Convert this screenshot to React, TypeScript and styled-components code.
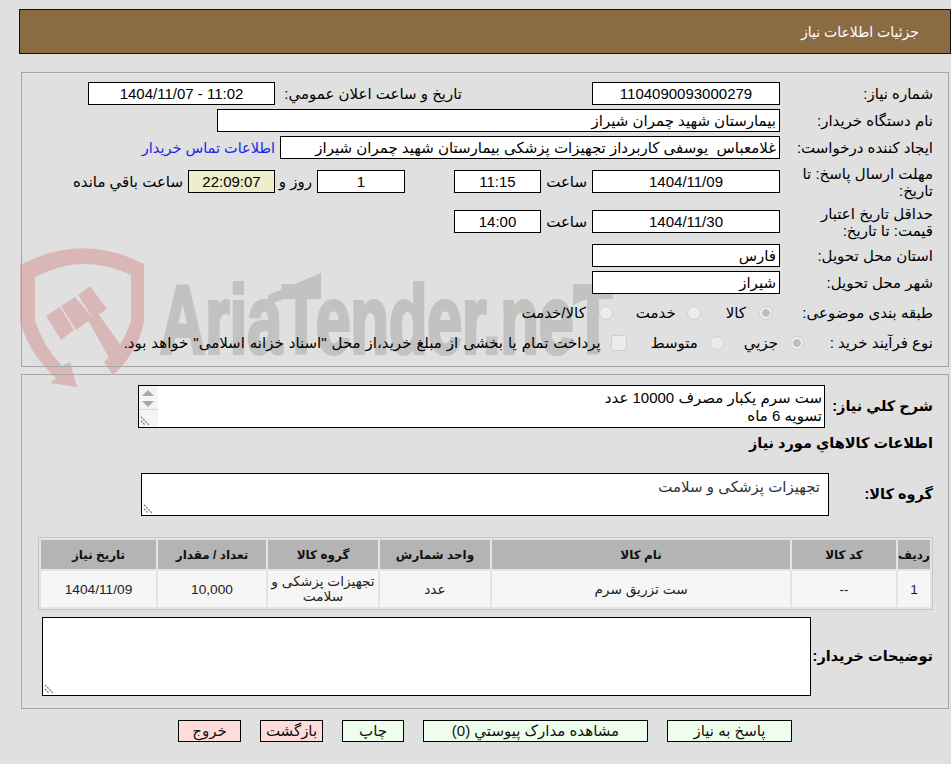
import React from "react";
import styled, { createGlobalStyle } from "styled-components";

const GlobalStyle = createGlobalStyle`
  html, body {
    margin: 0;
    padding: 0;
    background: #e0e0e0;
  }
  body {
    font-family: "Liberation Sans", "DejaVu Sans", sans-serif;
    font-size: 15px;
    color: #000;
  }
`;

const Page = styled.div`
  position: relative;
  width: 951px;
  height: 764px;
  overflow: hidden;
  direction: rtl;
  padding: 9px 2px 0 2px;
  box-sizing: border-box;
`;

const Header = styled.div`
  height: 45px;
  margin: 0 -2px 0 17px;
  box-sizing: border-box;
  border: 1px solid #111;
  background: #8b6b41;
  color: #fff;
  font-size: 14px;
  display: flex;
  align-items: center;
  padding-right: 31px;
`;

const Panel = styled.section<{ $height: number; $top: number }>`
  position: relative;
  height: ${(p) => p.$height}px;
  margin: ${(p) => p.$top}px 0 0 19px;
  box-sizing: border-box;
  border: 1px solid #a6a6a6;
  padding-right: 15px;
`;

const FormBody = styled.div<{ $pad: number }>`
  position: relative;
  z-index: 2;
  padding-top: ${(p) => p.$pad}px;
`;

const Row = styled.div<{ $h: number; $mb?: number; $mt?: number }>`
  display: flex;
  align-items: center;
  height: ${(p) => p.$h}px;
  margin-top: ${(p) => p.$mt ?? 0}px;
  margin-bottom: ${(p) => p.$mb ?? 0}px;
`;

const Label = styled.div<{ $bold?: boolean; $w?: number }>`
  width: ${(p) => p.$w ?? 153}px;
  flex: none;
  line-height: 17px;
  font-weight: ${(p) => (p.$bold ? 700 : 400)};
  font-size: ${(p) => (p.$bold ? 14.5 : 15)}px;
`;

const Field = styled.div<{ $w: number; $center?: boolean; $bg?: string; $ltr?: boolean; $mr?: number }>`
  width: ${(p) => p.$w}px;
  height: 23px;
  flex: none;
  box-sizing: border-box;
  border: 1px solid #000;
  background: ${(p) => p.$bg ?? "#fff"};
  line-height: 21px;
  padding: 0 3px;
  margin-right: ${(p) => p.$mr ?? 0}px;
  white-space: pre;
  overflow: hidden;
  direction: ${(p) => (p.$ltr ? "ltr" : "rtl")};
  text-align: ${(p) => (p.$center ? "center" : "right")};
`;

const Text = styled.span<{ $w?: number; $mr?: number; $gap?: number }>`
  flex: none;
  width: ${(p) => (p.$w ? `${p.$w}px` : "auto")};
  margin-right: ${(p) => p.$mr ?? 0}px;
  word-spacing: ${(p) => p.$gap ?? 0}px;
  white-space: nowrap;
`;

const LinkText = styled(Text)`
  color: #2222ee;
  font-size: 14.5px;
`;

const Radio = styled.span<{ $on?: boolean; $ml: number; $mr: number }>`
  width: 14px;
  height: 14px;
  flex: none;
  box-sizing: border-box;
  border-radius: 50%;
  border: 1px solid #d0d0d0;
  background: ${(p) =>
    p.$on ? "radial-gradient(circle, #bdbdbd 0 3.5px, #ececec 4px)" : "#ececec"};
  margin-left: ${(p) => p.$ml}px;
  margin-right: ${(p) => p.$mr}px;
`;

const Check = styled.span<{ $mr: number }>`
  width: 16px;
  height: 16px;
  flex: none;
  box-sizing: border-box;
  border: 1px solid #cfcfcf;
  border-radius: 2px;
  background: #ececec;
  margin: 0 ${(p) => p.$mr}px 0 10px;
`;

const BoxWrap = styled.div<{ $w: number; $h: number }>`
  position: relative;
  width: ${(p) => p.$w}px;
  height: ${(p) => p.$h}px;
  flex: none;
  box-sizing: border-box;
  border: 1px solid #000;
  background: #fff;
`;

const Area = styled.textarea<{ $pad?: string; $color?: string }>`
  display: block;
  width: 100%;
  height: 100%;
  box-sizing: border-box;
  border: 0;
  outline: 0;
  margin: 0;
  padding: ${(p) => p.$pad ?? "2px"};
  background: transparent;
  resize: none;
  overflow: hidden;
  direction: rtl;
  font: inherit;
  line-height: 18px;
  color: ${(p) => p.$color ?? "#000"};
`;

const Grip = styled.svg`
  position: absolute;
  left: 1px;
  bottom: 1px;
  width: 11px;
  height: 11px;
`;

const ScrollStub = styled.div`
  position: absolute;
  left: 0;
  top: 0;
  bottom: 0;
  width: 19px;
  background: #f4f4f4;
`;

const Arrow = styled.span<{ $up?: boolean }>`
  position: absolute;
  left: 3px;
  top: ${(p) => (p.$up ? 4 : 15)}px;
  width: 0;
  height: 0;
  border-left: 6px solid transparent;
  border-right: 6px solid transparent;
  border-bottom: ${(p) => (p.$up ? "6px solid #a6a6a6" : "0")};
  border-top: ${(p) => (p.$up ? "0" : "6px solid #a6a6a6")};
`;

const StubLine = styled.span`
  position: absolute;
  left: 0;
  right: 0;
  top: 23px;
  height: 1px;
  background: #d8d8d8;
`;

const GoodsTable = styled.table`
  width: 895px;
  border-collapse: separate;
  border-spacing: 2px;
  border: 1px solid #c6c6c6;
  background: #e4e4e4;
  table-layout: fixed;
  font-size: 13.7px;
`;

const Th = styled.th<{ $w: number }>`
  width: ${(p) => p.$w}px;
  height: 29px;
  padding: 0;
  background: #b4b4b4;
  font-size: 12px;
  font-weight: 700;
  color: #111;
`;

const Td = styled.td`
  height: 36px;
  padding: 0;
  background: #f6f6f6;
  text-align: center;
  line-height: 15px;
  color: #222;
`;

const Actions = styled.div`
  display: flex;
  justify-content: flex-start;
  gap: 19px;
  margin: 11px 157px 0 0;
`;

const Action = styled.button<{ $w: number; $danger?: boolean }>`
  width: ${(p) => p.$w}px;
  height: 22px;
  box-sizing: border-box;
  padding: 0;
  border: 1px solid #000;
  border-radius: 0;
  background: ${(p) => (p.$danger ? "#ffdcdc" : "#edfeed")};
  font: inherit;
  color: #111;
`;

const Watermark = styled.svg`
  position: absolute;
  left: 0;
  top: 240px;
  z-index: 1;
  direction: ltr;
  pointer-events: none;
`;

const Sheet = styled.div`
  position: relative;
  z-index: 2;
`;

const ResizeGrip = () => (
  <Grip viewBox="0 0 11 11">
    <path d="M1 2 L9 10 M1 6 L5 10" stroke="#777" strokeWidth="1.2" fill="none" strokeDasharray="2 1" />
  </Grip>
);

const AriaLogo = () => (
  <Watermark width="640" height="150" viewBox="0 240 640 150">
    <g fill="#dab7b7">
      <path d="M77 387 L50 383 L56 378 Q30 355 20 322 V265 Q82 232 144 264 V322 Q138 352 113 375 L104 362 Q124 345 131 320 V275 Q82 252 35 277 V320 Q42 345 62 366 L70 362 Z" />
      <path d="M46 316 L60 307 L74 330 L61 340 Z" />
      <path d="M61 306 L75 297 L93 318 L76 330 Z" />
      <path d="M78 295 L90 286 L107 309 L93 318 Z" />
      <path d="M88 320 L97 312 L122 347 L113 375 L108 356 Z" />
    </g>
    <g fill="#c2c2c2">
      <text
        x="160"
        y="353"
        textLength="452"
        lengthAdjust="spacingAndGlyphs"
        fontFamily="'Liberation Sans', sans-serif"
        fontWeight="700"
        fontSize="97"
        stroke="#c2c2c2"
        strokeWidth="4"
      >
        AriaTender.neT
      </text>
      <path d="M268 295 L321 273 V285 L268 305 Z" />
      <path d="M573 295 L618 273 V285 L573 305 Z" />
    </g>
  </Watermark>
);

export default function App() {
  return (
    <Page>
      <GlobalStyle />
      <AriaLogo />
      <Sheet>
        <Header>جزئیات اطلاعات نیاز</Header>
        <Panel $height={295} $top={18}>
          <FormBody $pad={9}>
            <Row $h={23} $mb={4}>
              <Label>شماره نیاز:</Label>
              <Field $w={188} $center>1104090093000279</Field>
              <Text $w={187} $mr={130}>تاریخ و ساعت اعلان عمومي:</Text>
              <Field $w={187} $center $ltr>1404/11/07 - 11:02</Field>
            </Row>
            <Row $h={23} $mb={4}>
              <Label>نام دستگاه خریدار:</Label>
              <Field $w={563}>بیمارستان شهید چمران شیراز</Field>
            </Row>
            <Row $h={23} $mb={11}>
              <Label>ایجاد کننده درخواست:</Label>
              <Field $w={500}>غلامعباس  یوسفی کاربرداز تجهیزات پزشکی بیمارستان شهید چمران شیراز</Field>
              <LinkText $mr={5}>اطلاعات تماس خریدار</LinkText>
            </Row>
            <Row $h={23} $mb={17}>
              <Label>مهلت ارسال پاسخ: تا تاریخ:</Label>
              <Field $w={188} $center>1404/11/09</Field>
              <Text $mr={5} $w={46}>ساعت</Text>
              <Field $w={87} $center>11:15</Field>
              <Field $w={88} $center $mr={49}>1</Field>
              <Text $mr={5} $w={37}>روز و</Text>
              <Field $w={87} $center $bg="#eeeecc">22:09:07</Field>
              <Text $mr={5}>ساعت باقي مانده</Text>
            </Row>
            <Row $h={23} $mb={11}>
              <Label>حداقل تاریخ اعتبار قیمت: تا تاریخ:</Label>
              <Field $w={188} $center>1404/11/30</Field>
              <Text $mr={5} $w={46}>ساعت</Text>
              <Field $w={87} $center>14:00</Field>
            </Row>
            <Row $h={23} $mb={4}>
              <Label>استان محل تحویل:</Label>
              <Field $w={188}>فارس</Field>
            </Row>
            <Row $h={23} $mb={7}>
              <Label>شهر محل تحویل:</Label>
              <Field $w={188}>شیراز</Field>
            </Row>
            <Row $h={23} $mb={7}>
              <Label>طبقه بندی موضوعی:</Label>
              <Radio $on $mr={7} $ml={13} />
              <Text>کالا</Text>
              <Radio $mr={25} $ml={11} />
              <Text>خدمت</Text>
              <Radio $mr={23} $ml={13} />
              <Text>کالا/خدمت</Text>
            </Row>
            <Row $h={23}>
              <Label $w={129}>نوع فرآیند خرید :</Label>
              <Radio $on $mr={0} $ml={12} />
              <Text>جزیي</Text>
              <Radio $mr={20} $ml={12} />
              <Text>متوسط</Text>
              <Check $mr={24} />
              <Text $gap={0.8}>پرداخت تمام یا بخشی از مبلغ خرید،از محل "اسناد خزانه اسلامی" خواهد بود.</Text>
            </Row>
          </FormBody>
        </Panel>
        <Panel $height={335} $top={7}>
          <FormBody $pad={10}>
            <Row $h={43} $mb={5}>
              <Label $bold $w={108}>شرح کلي نیاز:</Label>
              <BoxWrap $w={687} $h={43}>
                <Area readOnly $pad="3px 2px 0 20px" value={"ست سرم یکبار مصرف 10000 عدد\nتسویه 6 ماه"} />
                <ScrollStub>
                  <Arrow $up />
                  <Arrow />
                  <StubLine />
                </ScrollStub>
                <ResizeGrip />
              </BoxWrap>
            </Row>
            <Row $h={21} $mb={19}>
              <Label $bold $w={300}>اطلاعات کالاهاي مورد نیاز</Label>
            </Row>
            <Row $h={43} $mb={21}>
              <Label $bold $w={104}>گروه کالا:</Label>
              <BoxWrap $w={688} $h={43}>
                <Area readOnly $pad="4px 8px 0 8px" $color="#333" value="تجهیزات پزشکی و سلامت" />
                <ResizeGrip />
              </BoxWrap>
            </Row>
            <GoodsTable>
              <thead>
                <tr>
                  <Th $w={32}>ردیف</Th>
                  <Th $w={104}>کد کالا</Th>
                  <Th $w={298}>نام کالا</Th>
                  <Th $w={110}>واحد شمارش</Th>
                  <Th $w={110}>گروه کالا</Th>
                  <Th $w={108}>تعداد / مقدار</Th>
                  <Th $w={115}>تاریخ نیاز</Th>
                </tr>
              </thead>
              <tbody>
                <tr>
                  <Td>1</Td>
                  <Td>--</Td>
                  <Td>ست تزریق سرم</Td>
                  <Td>عدد</Td>
                  <Td>تجهیزات پزشکی و سلامت</Td>
                  <Td>10,000</Td>
                  <Td>1404/11/09</Td>
                </tr>
              </tbody>
            </GoodsTable>
            <Row $h={79} $mt={7}>
              <Label $bold $w={122}>توضیحات خریدار:</Label>
              <BoxWrap $w={769} $h={79}>
                <Area readOnly value="" />
                <ResizeGrip />
              </BoxWrap>
            </Row>
          </FormBody>
        </Panel>
        <Actions>
          <Action $w={125}>پاسخ به نیاز</Action>
          <Action $w={225}>مشاهده مدارک پیوستي (0)</Action>
          <Action $w={62}>چاپ</Action>
          <Action $w={63} $danger>بازگشت</Action>
          <Action $w={63} $danger>خروج</Action>
        </Actions>
      </Sheet>
    </Page>
  );
}
